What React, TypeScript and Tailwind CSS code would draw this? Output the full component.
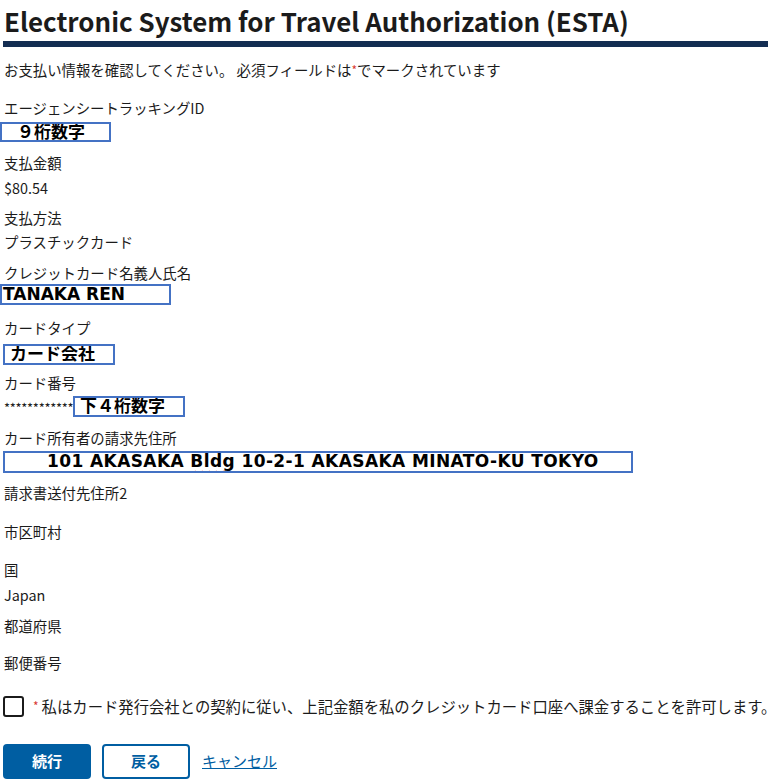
import React from 'react';

const jp = { fontFamily: '"Noto Sans CJK JP", "Noto Sans", sans-serif' };
const mark = { fontFamily: '"DejaVu Sans", "Noto Sans CJK JP", sans-serif' };

function Line({ mt, children }: { mt: string; children: React.ReactNode }) {
  return <div className={`${mt} h-[20px] leading-[20px] text-[14.4px] text-[#1b1b1b] whitespace-nowrap`}>{children}</div>;
}

function Mark({ className, children }: { className: string; children: React.ReactNode }) {
  return (
    <div style={mark} className={`border-2 border-[#4472c4] font-bold text-[17px] leading-[17px] text-black whitespace-nowrap overflow-hidden ${className}`}>
      {children}
    </div>
  );
}

export default function App() {
  return (
    <div style={jp} className="bg-white w-[775px] h-[783px] overflow-hidden text-[#1b1b1b]">
      <h1 className="pl-[4px] pt-[3px] h-[38px] text-[25.9px] leading-[36px] font-bold whitespace-nowrap">
        Electronic System for Travel Authorization (ESTA)
      </h1>
      <div className="ml-[3px] mr-[7px] mt-[3px] h-[6px] bg-[#132d52]" />

      <div className="pl-[4px]">
        <Line mt="mt-[13px]">
          お支払い情報を確認してください。 必須フィールドは<span className="text-[#d83933] text-[12px] align-top">*</span>でマークされています
        </Line>

        <Line mt="mt-[18px]">エージェンシートラッキングID</Line>
        <Mark className="mt-[4px] -ml-[4px] w-[111px] h-[20px] pl-[15px]">９桁数字</Mark>

        <Line mt="mt-[11px]">支払金額</Line>
        <Line mt="mt-[5px]">$80.54</Line>

        <Line mt="mt-[10px]">支払方法</Line>
        <Line mt="mt-[4px]">プラスチックカード</Line>

        <Line mt="mt-[11px]">クレジットカード名義人氏名</Line>
        <Mark className="mt-[1px] -ml-[4px] w-[171px] h-[21px] pl-[1px]">TANAKA REN</Mark>

        <Line mt="mt-[13px]">カードタイプ</Line>
        <Mark className="mt-[6px] -ml-[1px] w-[112px] h-[21px] pl-[5px]">カード会社</Mark>

        <Line mt="mt-[8px]">カード番号</Line>
        <div className="mt-[3px] flex items-start h-[21px]">
          <span className="text-[13px] leading-[24px] tracking-[-0.3px] w-[69px] overflow-hidden whitespace-nowrap">************</span>
          <Mark className="w-[112px] h-[21px] pl-[5px]">下４桁数字</Mark>
        </div>

        <Line mt="mt-[11px]">カード所有者の請求先住所</Line>
        <Mark className="mt-[3px] -ml-[1px] w-[630px] h-[22px] pl-[42px] tracking-[0.4px]">
          101 AKASAKA{' '}
          <span className="underline decoration-wavy decoration-[#e02020] decoration-1 underline-offset-[3px]">Bldg</span>{' '}
          10-2-1 AKASAKA MINATO-KU TOKYO
        </Mark>

        <Line mt="mt-[10px]">請求書送付先住所2</Line>
        <Line mt="mt-[19px]">市区町村</Line>
        <Line mt="mt-[18px]">国</Line>
        <Line mt="mt-[5px]">Japan</Line>
        <Line mt="mt-[11px]">都道府県</Line>
        <Line mt="mt-[17px]">郵便番号</Line>

        <label className="mt-[22px] -ml-[1px] flex items-center h-[22px] whitespace-nowrap">
          <span className="w-[21px] h-[21px] border-2 border-[#1b1b1b] rounded-[3px] shrink-0" />
          <span className="ml-[9px] text-[#d83933] text-[12px]">*</span>
          <span className="ml-[3px] text-[15.35px]">
            私はカード発行会社との契約に従い、上記金額を私のクレジットカード口座へ課金することを許可します。
          </span>
        </label>

        <div className="mt-[27px] -ml-[1px] flex items-center">
          <button className="w-[88px] h-[35px] rounded-[4px] bg-[#005ea2] text-white font-bold text-[15px]">続行</button>
          <button className="ml-[11px] w-[88px] h-[35px] rounded-[4px] border-2 border-[#005ea2] text-[#005ea2] bg-white font-bold text-[15px]">戻る</button>
          <a href="#" className="ml-[12px] text-[15px] text-[#005ea2] underline">キャンセル</a>
        </div>
      </div>
    </div>
  );
}
